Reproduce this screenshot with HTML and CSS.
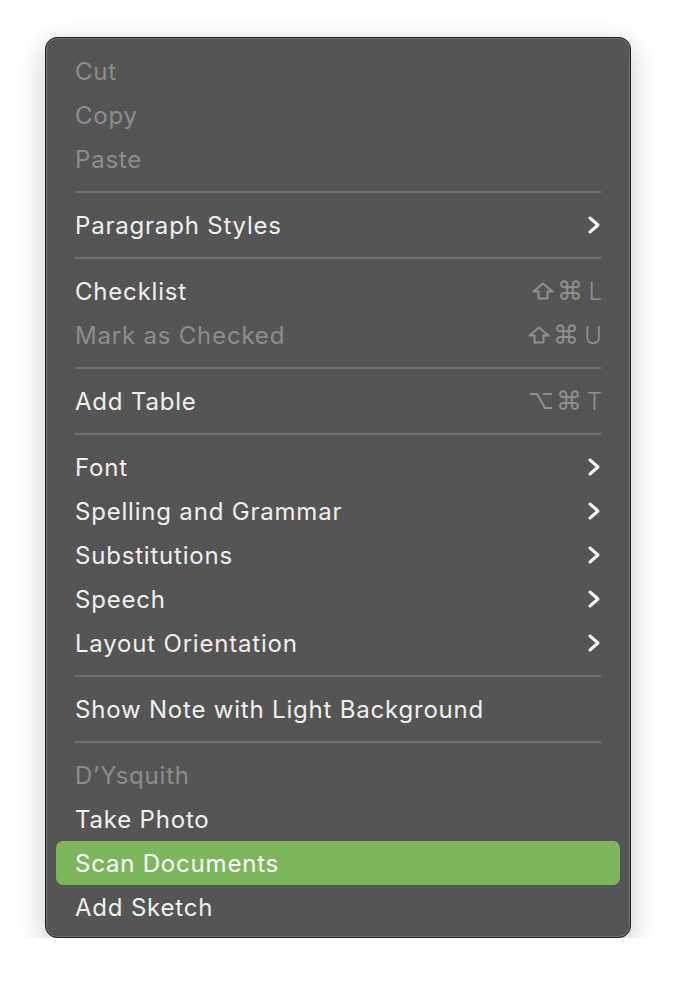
FILE: index.html
```html
<!DOCTYPE html>
<html>
	<head>
		<title>Context menu</title>
		<link rel="stylesheet" href="styles.css">
	</head>
	<body>
		<div class="menu">
			<div class="item off">Cut</div>
			<div class="item off">Copy</div>
			<div class="item off">Paste</div>
			<div class="sep"></div>
			<div class="item">Paragraph Styles <span class="chev"><svg viewBox="0 0 12 18" width="12" height="18"><polyline points="2,2 10,9 2,16" /></svg></span></div>
			<div class="sep"></div>
			<div class="item">Checklist
				<span class="keys"><svg class="sym" viewBox="0 0 22 18" width="22" height="18"><polygon points="11,1.5 20.5,9.5 15.5,9.5 15.5,16.5 6.5,16.5 6.5,9.5 1.5,9.5" /></svg><span class="cmd">⌘</span>L</span>
			</div>
			<div class="item off">Mark as Checked
				<span class="keys"><svg class="sym" viewBox="0 0 22 18" width="22" height="18"><polygon points="11,1.5 20.5,9.5 15.5,9.5 15.5,16.5 6.5,16.5 6.5,9.5 1.5,9.5" /></svg><span class="cmd">⌘</span>U</span>
			</div>
			<div class="sep"></div>
			<div class="item">Add Table
				<span class="keys"><svg class="sym" viewBox="0 0 24 18" width="24" height="18"><polyline points="1,2 8,2 16,16 23,16" /><line x1="14" y1="2" x2="23" y2="2" /></svg><span class="cmd">⌘</span>T</span>
			</div>
			<div class="sep"></div>
			<div class="item">Font <span class="chev"><svg viewBox="0 0 12 18" width="12" height="18"><polyline points="2,2 10,9 2,16" /></svg></span></div>
			<div class="item">Spelling and Grammar <span class="chev"><svg viewBox="0 0 12 18" width="12" height="18"><polyline points="2,2 10,9 2,16" /></svg></span></div>
			<div class="item">Substitutions <span class="chev"><svg viewBox="0 0 12 18" width="12" height="18"><polyline points="2,2 10,9 2,16" /></svg></span></div>
			<div class="item">Speech <span class="chev"><svg viewBox="0 0 12 18" width="12" height="18"><polyline points="2,2 10,9 2,16" /></svg></span></div>
			<div class="item">Layout Orientation <span class="chev"><svg viewBox="0 0 12 18" width="12" height="18"><polyline points="2,2 10,9 2,16" /></svg></span></div>
			<div class="sep"></div>
			<div class="item">Show Note with Light Background</div>
			<div class="sep"></div>
			<div class="item off">D’Ysquith</div>
			<div class="item">Take Photo</div>
			<div class="item active">Scan Documents</div>
			<div class="item">Add Sketch</div>
		</div>
	</body>
</html>
```

FILE: styles.css
```css
body {
	margin: 0;
	background-color: #ffffff;
	font-family: "Inter", "Liberation Sans", sans-serif;
}

.menu {
	box-sizing: content-box;
	width: 564px;
	margin-top: 37px;
	margin-left: 45px;
	padding: 11px 10px 8px 10px;
	background-color: #555555;
	border: 1px solid #222222;
	border-radius: 12px;
	box-shadow: inset 0 0 0 1px #6f6f6f, 0 8px 28px rgba(0, 0, 0, 0.22);
}

.item {
	display: flex;
	align-items: center;
	justify-content: space-between;
	height: 44px;
	padding: 0 18px 0 19px;
	font-size: 24px;
	letter-spacing: 0.8px;
	color: #f0f0f0;
	border-radius: 7px;
}

.off {
	color: #8c8c8c;
}

.active {
	background-color: #7db65c;
	color: #ffffff;
}

.keys {
	display: flex;
	align-items: center;
	gap: 3px;
	color: #8f8f8f;
	font-size: 24px;
	font-weight: 300;
	letter-spacing: 0;
}

.cmd {
	font-family: "DejaVu Sans", sans-serif;
	font-size: 26px;
	margin-right: 2px;
}

.sym polygon,
.sym polyline,
.sym line {
	fill: none;
	stroke: #8f8f8f;
	stroke-width: 2;
	stroke-linejoin: round;
}

.chev {
	display: flex;
	margin-right: 2px;
}

.chev polyline {
	fill: none;
	stroke: #f4f4f4;
	stroke-width: 3;
	stroke-linecap: round;
	stroke-linejoin: round;
}

.sep {
	height: 22px;
	display: flex;
	align-items: center;
	padding: 0 19px;
}

.sep::after {
	content: "";
	display: block;
	width: 100%;
	height: 2px;
	background-color: #707070;
}
```
